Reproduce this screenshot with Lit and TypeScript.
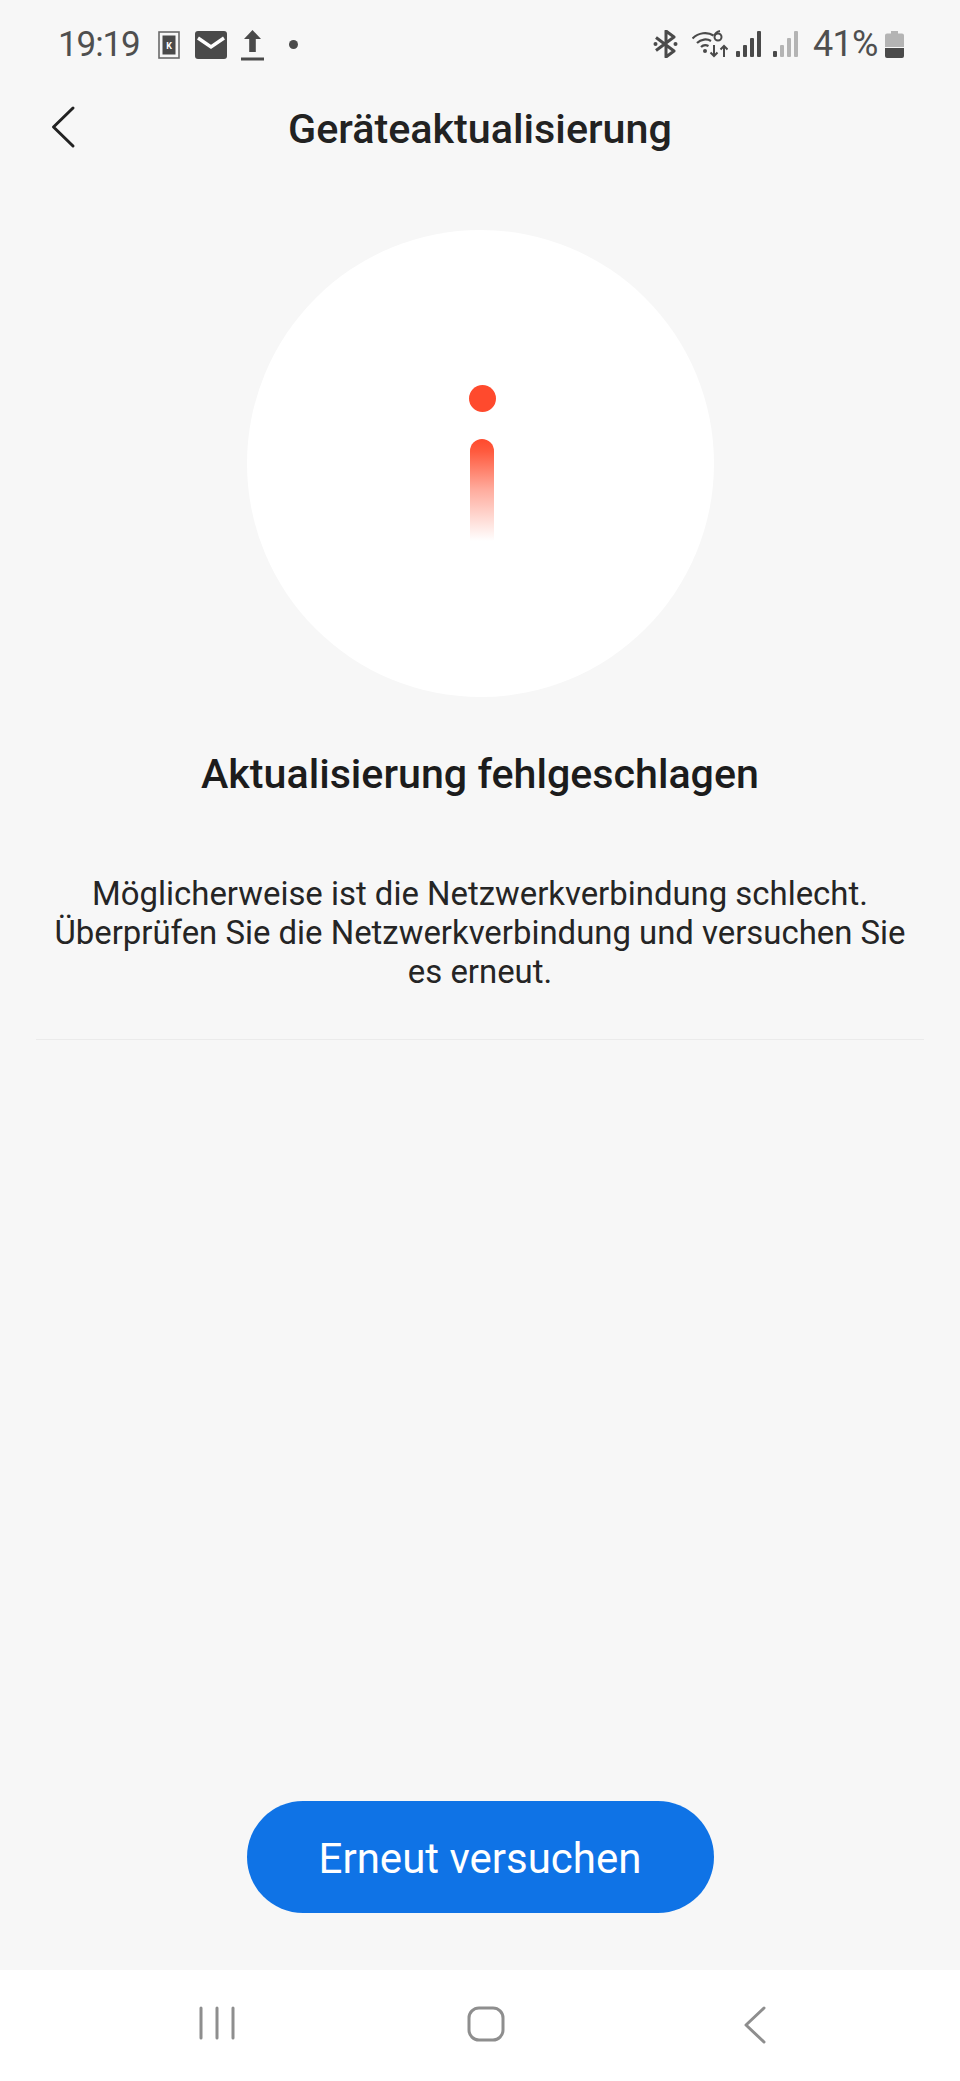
import { LitElement, html, css } from "lit";
import { customElement } from "lit/decorators.js";

@customElement("app-root")
export class AppRoot extends LitElement {
  static styles = css`
    :host { display: block; font-family: Roboto, "Liberation Sans", sans-serif; }
    .page { height: 2081px; background: #f7f7f7; display: flex; flex-direction: column; overflow: hidden; }
    svg { display: block; flex: none; }

    .status { height: 88px; box-sizing: border-box; padding: 30px 56px 0 58px; display: flex; align-items: flex-start; color: #4f4f4f; }
    .time { font-size: 35px; font-weight: 400; line-height: 29px; width: 100px; letter-spacing: -1.1px; }
    .left { display: flex; align-items: flex-start; }
    .spacer { flex: 1; }
    .right { display: flex; align-items: flex-start; }
    .pct { font-size: 36px; font-weight: 400; line-height: 28px; margin: 0 7px 0 15px; width: 65px; white-space: nowrap; letter-spacing: -0.7px; }

    .header { height: 82px; position: relative; display: flex; align-items: center; justify-content: center; }
    .title { font-size: 41.300px; font-weight: 500; color: #222; }
    .back { position: absolute; left: 50px; top: 17px; }

    .main { flex: 1; display: flex; flex-direction: column; align-items: center; }
    .circle { width: 467px; height: 467px; margin-top: 60px; border-radius: 50%; background: #fff; display: flex; flex-direction: column; align-items: center; box-sizing: border-box; padding: 155px 0 0 4px; }
    .dot { width: 27px; height: 27px; border-radius: 50%; background: #ff4a2d; }
    .bar { width: 24px; height: 102px; margin-top: 27px; border-radius: 12px 12px 0 0; background: linear-gradient(180deg, #ff4a2d 0%, #ff5a3e 12%, rgba(255,90,62,0.5) 50%, rgba(255,90,62,0) 100%); }
    .heading { margin: 49px 0 0; font-size: 41.200px; line-height: 56px; font-weight: 500; color: #1c1c1c; }
    .body { margin: 72px 0 0; padding: 0 36px; font-size: 32.900px; line-height: 39px; text-align: center; color: #252525; }
    .rule { align-self: stretch; margin: 48px 36px 0; height: 1px; background: #ebebeb; }
    .grow { flex: 1; }
    .btn { width: 467px; height: 112px; margin-bottom: 57px; padding: 3px 0 0; border: 0; border-radius: 56px; background: #0f73e6; color: #fff; font: 400 42px Roboto, "Liberation Sans", sans-serif; }

    .nav { height: 111px; background: #fff; display: flex; justify-content: center; align-items: flex-start; padding: 36px 0 0 12px; box-sizing: border-box; }
    .navitem { width: 269px; display: flex; justify-content: center; }
  `;

  render() {
    return html`<div class="page">
      <div class="status">
        <div class="left">
          <div class="time">19:19</div>
          <svg width="22" height="28" viewBox="0 0 22 28" style="margin-top:1px"><rect x="1" y="1" width="20" height="26" fill="none" stroke="#6a6a6a" stroke-width="1.6"/><rect x="4.500" y="4.500" width="13" height="19" fill="#4a4a4a"/><text x="11" y="18" font-size="9" font-weight="700" text-anchor="middle" fill="#fff" font-family="Roboto">K</text></svg>
          <svg width="32" height="28" viewBox="0 0 32 28" style="margin:1px 0 0 15px"><rect width="32" height="28" rx="3" fill="#4a4a4a"/><path d="M3 7l13 9 13-9" fill="none" stroke="#fff" stroke-width="3.400"/></svg>
          <svg width="23" height="31" viewBox="0 0 23 31" style="margin-left:14px"><path d="M11.500 0l8.500 9h-5.200v13h-6.600v-13h-5.200z" fill="#4a4a4a"/><rect y="27.500" width="23" height="3" fill="#4a4a4a"/></svg>
          <svg width="9" height="9" viewBox="0 0 9 9" style="margin:10px 0 0 25px"><circle cx="4.500" cy="4.500" r="4.500" fill="#4a4a4a"/></svg>
        </div>
        <div class="spacer"></div>
        <div class="right">
          <svg width="25" height="28" viewBox="0 0 25 28"><path d="M3 7.500l18 13.500-8 6v-26l8 6-18 13.500" fill="none" stroke="#4a4a4a" stroke-width="3" stroke-linejoin="round"/><circle cx="2.500" cy="14" r="2" fill="#4a4a4a"/><circle cx="22.500" cy="14" r="2" fill="#4a4a4a"/></svg>
          <svg width="36" height="28" viewBox="0 0 36 28" style="margin-left:14px"><g fill="none" stroke="#4a4a4a" stroke-width="2.200"><path d="M0.500 8.500c6-6 15-7 21-3"/><path d="M5 13c4-4 10-4.500 14-2"/><path d="M9 17c2-2 5-2.300 7.500-1"/></g><circle cx="13" cy="21" r="2" fill="#4a4a4a"/><circle cx="26" cy="7" r="3.500" fill="none" stroke="#4a4a4a" stroke-width="2"/><path d="M28 1c-3 .5-5 2.500-5.500 5" fill="none" stroke="#4a4a4a" stroke-width="2"/><path d="M22 15v11m-3.500-3.500l3.500 3.500 3.500-3.500M32 27v-11m-3.500 3.500l3.500-3.500 3.500 3.500" fill="none" stroke="#4a4a4a" stroke-width="2"/></svg>
          <svg width="25" height="26" viewBox="0 0 25 26" style="margin:1px 0 0 8px"><g fill="#4a4a4a"><rect x="0" y="20" width="4" height="6" rx="1"/><rect x="7" y="14" width="4" height="12" rx="1"/><rect x="14" y="7" width="4" height="19" rx="1"/><rect x="21" y="0" width="4" height="26" rx="1"/></g></svg>
          <svg width="25" height="26" viewBox="0 0 25 26" style="margin:1px 0 0 12px"><rect x="0" y="20" width="4" height="6" rx="1" fill="#4a4a4a"/><g fill="#b4b4b4"><rect x="7" y="14" width="4" height="12" rx="1"/><rect x="14" y="7" width="4" height="19" rx="1"/><rect x="21" y="0" width="4" height="26" rx="1"/></g></svg>
          <div class="pct">41%</div>
          <svg width="19" height="27" viewBox="0 0 19 27" style="margin-top:1px"><path d="M6 0h7v2.500h4a2 2 0 0 1 2 2V16H0V4.500a2 2 0 0 1 2-2h4z" fill="#b4b4b4"/><path d="M0 17h19v8a2 2 0 0 1-2 2H2a2 2 0 0 1-2-2z" fill="#4a4a4a"/></svg>
        </div>
      </div>

      <div class="header">
        <svg class="back" width="26" height="44" viewBox="0 0 26 44"><path d="M23 3L3.500 22 23 41" fill="none" stroke="#222" stroke-width="3" stroke-linecap="round" stroke-linejoin="round"/></svg>
        <div class="title">Geräteaktualisierung</div>
      </div>

      <div class="main">
        <div class="circle"><div class="dot"></div><div class="bar"></div></div>
        <h1 class="heading">Aktualisierung fehlgeschlagen</h1>
        <p class="body">Möglicherweise ist die Netzwerkverbindung schlecht.<br>Überprüfen Sie die Netzwerkverbindung und versuchen Sie<br>es erneut.</p>
        <div class="rule"></div>
        <div class="grow"></div>
        <button class="btn">Erneut versuchen</button>
      </div>

      <div class="nav">
        <div class="navitem"><svg width="36" height="34" viewBox="0 0 36 34"><g stroke="#8e8e8e" stroke-width="3" stroke-linecap="round"><path d="M2 2v30M18 2v30M34 2v30"/></g></svg></div>
        <div class="navitem"><svg width="38" height="36" viewBox="0 0 38 36"><rect x="2" y="2" width="34" height="32" rx="10" fill="none" stroke="#8e8e8e" stroke-width="3"/></svg></div>
        <div class="navitem"><svg width="24" height="38" viewBox="0 0 24 38"><path d="M21 2L3 19l18 17" fill="none" stroke="#8e8e8e" stroke-width="3" stroke-linecap="round" stroke-linejoin="round"/></svg></div>
      </div>
    </div>`;
  }
}
